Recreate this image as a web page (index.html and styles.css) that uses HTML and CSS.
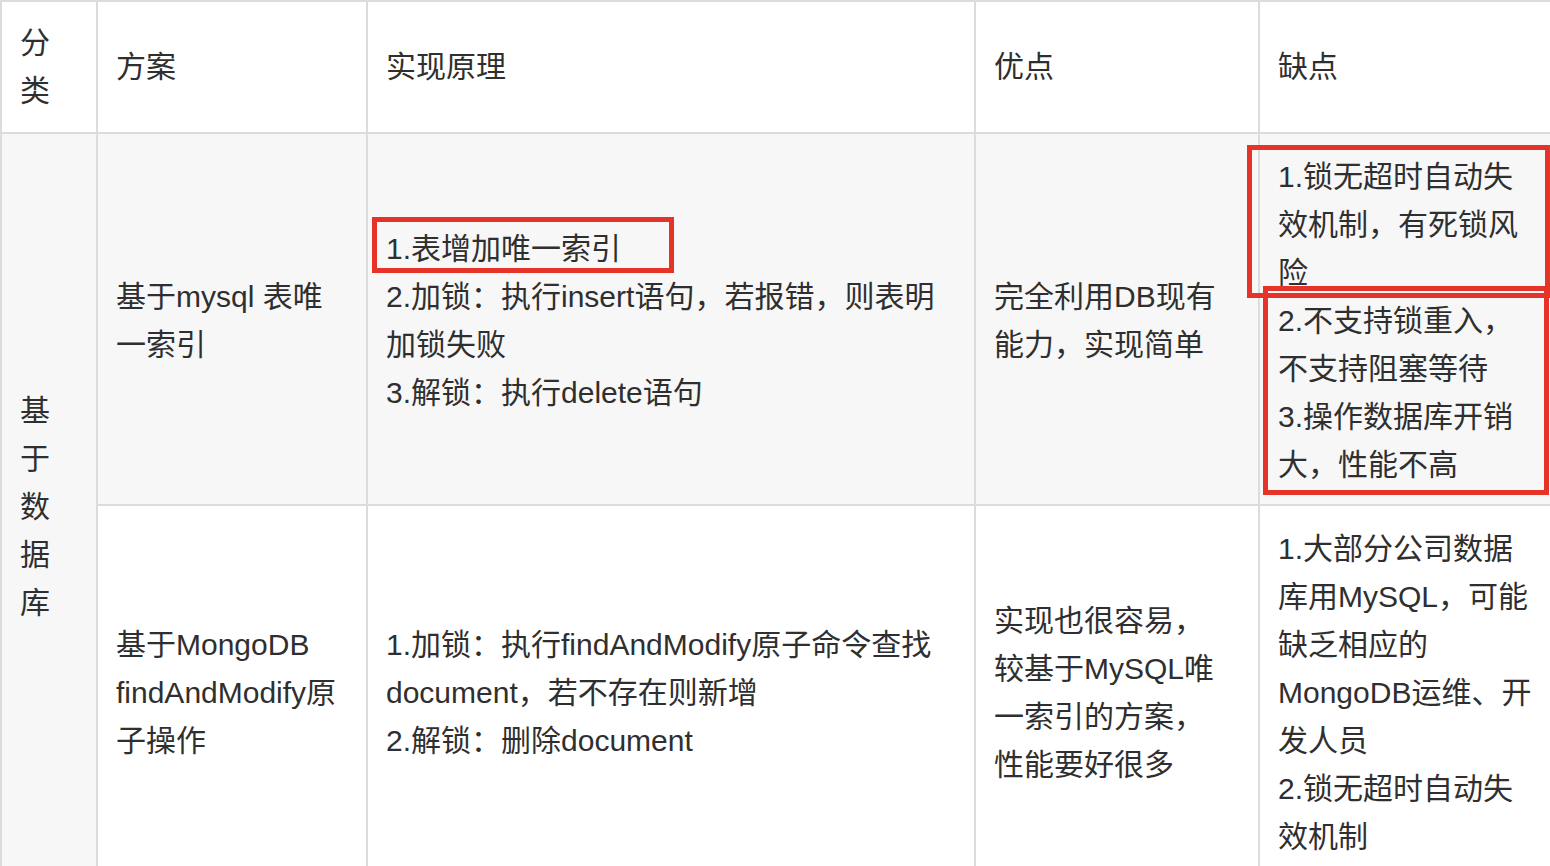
FILE: index.html
```html
<!DOCTYPE html>
<html lang="zh-CN">
<head>
    <meta charset="UTF-8">
    <meta name="viewport" content="width=device-width, initial-scale=1.0">
    <title>分布式锁方案对比</title>
    <link rel="stylesheet" href="styles.css">
</head>
<body>
    <div class="sheet">
        <table class="compare">
            <colgroup>
                <col class="col-cat">
                <col class="col-plan">
                <col class="col-how">
                <col class="col-pros">
                <col class="col-cons">
            </colgroup>
            <thead>
                <tr>
                    <th class="cat">分类</th>
                    <th>方案</th>
                    <th>实现原理</th>
                    <th class="pros">优点</th>
                    <th>缺点</th>
                </tr>
            </thead>
            <tbody>
                <tr class="shaded">
                    <td class="cat" rowspan="2">基于数据库</td>
                    <td>基于mysql 表唯一索引</td>
                    <td>1.表增加唯一索引<br>2.加锁：执行insert语句，若报错，则表明加锁失败<br>3.解锁：执行delete语句</td>
                    <td class="pros">完全利用DB现有能力，实现简单</td>
                    <td>1.锁无超时自动失效机制，有死锁风险<br>2.不支持锁重入，不支持阻塞等待<br>3.操作数据库开销大，性能不高</td>
                </tr>
                <tr>
                    <td>基于MongoDB findAndModify原子操作</td>
                    <td>1.加锁：执行findAndModify原子命令查找document，若不存在则新增<br>2.解锁：删除document</td>
                    <td class="pros">实现也很容易，较基于MySQL唯一索引的方案，性能要好很多</td>
                    <td>1.大部分公司数据库用MySQL，可能缺乏相应的MongoDB运维、开发人员<br>2.锁无超时自动失效机制</td>
                </tr>
            </tbody>
        </table>

        <!-- annotation boxes drawn over the table -->
        <div class="mark mark-index"></div>
        <div class="mark mark-deadlock"></div>
        <div class="mark mark-reentry"></div>
    </div>
</body>
</html>
```

FILE: styles.css
```css
/* styles.css */

body {
    margin: 0;
    background-color: #fff;
    overflow: hidden;
    font-family: "Liberation Sans", "Noto Sans CJK SC", sans-serif;
    color: #2f2f2f;
}

.sheet {
    position: relative;
    width: 1550px;
    height: 866px;
    overflow: hidden;
}

.compare {
    border-collapse: collapse;
    table-layout: fixed;
    width: 1562px;
    font-size: 30px;
    line-height: 48px;
}

.col-cat { width: 96px; }
.col-plan { width: 270px; }
.col-how { width: 608px; }
.col-pros { width: 284px; }
.col-cons { width: 302px; }

.compare th,
.compare td {
    border: 2px solid #dcdcdc;
    padding: 17px 20px 17px 18px;
    text-align: left;
    vertical-align: middle;
    font-weight: normal;
}

.compare td {
    padding-top: 19px;
    padding-bottom: 15px;
}

.compare .pros {
    padding-right: 26px;
}

.compare thead tr {
    background-color: #fff;
}

.compare tr.shaded {
    background-color: #f7f7f7;
}

.mark {
    position: absolute;
    border: 5px solid #e6332a;
    box-sizing: border-box;
}

.mark-index {
    left: 372px;
    top: 217px;
    width: 302px;
    height: 56px;
}

.mark-deadlock {
    left: 1247px;
    top: 145px;
    width: 303px;
    height: 153px;
}

.mark-reentry {
    left: 1263px;
    top: 286px;
    width: 286px;
    height: 209px;
}
```
